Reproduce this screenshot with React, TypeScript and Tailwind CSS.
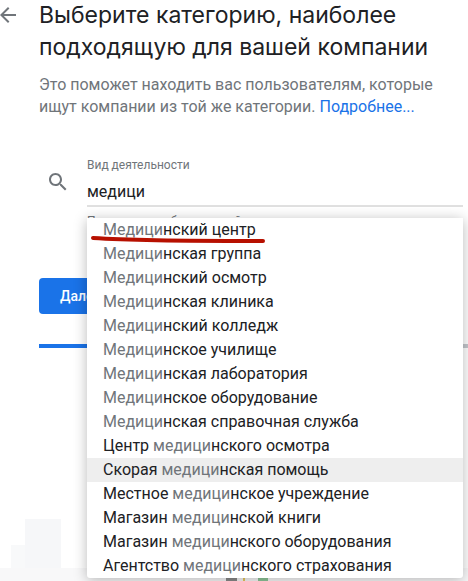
import React from 'react';

const items: [string, string, string][] = [
  ['', 'Медици', 'нский центр'],
  ['', 'Медици', 'нская группа'],
  ['', 'Медици', 'нский осмотр'],
  ['', 'Медици', 'нская клиника'],
  ['', 'Медици', 'нский колледж'],
  ['', 'Медици', 'нское училище'],
  ['', 'Медици', 'нская лаборатория'],
  ['', 'Медици', 'нское оборудование'],
  ['', 'Медици', 'нская справочная служба'],
  ['Центр ', 'медици', 'нского осмотра'],
  ['Скорая ', 'медици', 'нская помощь'],
  ['Местное ', 'медици', 'нское учреждение'],
  ['Магазин ', 'медици', 'нской книги'],
  ['Магазин ', 'медици', 'нского оборудования'],
  ['Агентство ', 'медици', 'нского страхования'],
];

function App() {
  return (
    <div className="relative h-[581px] w-[468px] overflow-hidden bg-white font-['Roboto',sans-serif]">
      <svg className="absolute left-[-4px] top-[3px] h-[24px] w-[24px] text-[#70757a]" viewBox="0 0 24 24" fill="currentColor">
        <path d="M20 11H7.83l5.59-5.59L12 4l-8 8 8 8 1.41-1.41L7.83 13H20v-2z" />
      </svg>

      <div className="flex flex-col pl-[39px]">
        <h1 className="whitespace-nowrap font-['Inter',sans-serif] text-[23px] text-[#202124]">
          <span className="block leading-[30px]">Выберите категорию, наиболее</span>
          <span className="mt-[1px] block leading-[32px]">подходящую для вашей компании</span>
        </h1>
        <p className="mt-[11px] whitespace-nowrap text-[16px] leading-[22px] text-[#70757a]">
          Это поможет находить вас пользователям, которые
          <br />
          ищут компании из той же категории. <span className="text-[#1a73e8]">Подробнее...</span>
        </p>

        <div className="mt-[39px] flex">
          <svg className="ml-[7px] mt-[13px] h-[24px] w-[24px] text-[#70757a]" viewBox="0 0 24 24" fill="currentColor">
            <path d="M15.5 14h-.79l-.28-.27C15.41 12.59 16 11.11 16 9.5 16 5.91 13.09 3 9.5 3S3 5.91 3 9.5 5.91 16 9.5 16c1.61 0 3.09-.59 4.23-1.57l.27.28v.79l5 4.99L20.49 19l-4.99-5zm-6 0C7.01 14 5 11.99 5 9.5S7.01 5 9.5 5 14 7.01 14 9.5 11.99 14 9.5 14z" />
          </svg>
          <div className="ml-[17px] w-[376px]">
            <div className="text-[12px] leading-[16px] text-[#70757a]">Вид деятельности</div>
            <div className="mt-[9px] border-b-2 border-[#e0e0e0] pb-[3px] text-[16px] leading-[20px] text-[#202124]">медици</div>
            <div className="mt-[6px] whitespace-nowrap text-[12px] leading-[16px] text-[#70757a]">
              Пользователи быстрее найдут вашу компанию
            </div>
          </div>
        </div>

        <button className="mt-[49px] flex h-[36px] w-[90px] items-center rounded-[4px] bg-[#1a73e8] pl-[21px] text-[14px] font-medium text-white">
          Далее
        </button>
        <div className="mt-[30px] flex h-[4px]">
          <div className="w-[60px] bg-[#1a73e8]" />
          <div className="flex-1 bg-[#c4c7cc]" />
        </div>
      </div>

      <div className="absolute left-[25px] top-[519px] h-[56px] w-[36px] bg-[#f6f7f9]" />
      <div className="absolute left-[11px] top-[545px] h-[30px] w-[14px] bg-[#f8f9fa]" />
      <div className="absolute bottom-0 left-0 h-[13px] w-full bg-[#f8f8f9]" />
      <svg className="absolute left-[225px] top-[575px]" width="46" height="6" viewBox="0 0 46 6">
        <rect x="1" y="1" width="11" height="5" fill="#8a8a8a" />
        <rect x="18" y="1" width="2" height="5" fill="#e8c860" />
        <rect x="33" y="1" width="10" height="5" fill="#8fc79a" />
      </svg>

      <div className="absolute left-[87px] top-[218px] w-[376px] rounded-b-[3px] bg-white text-[16px] leading-[24px] text-[#202124] shadow-[0_2px_14px_rgba(0,0,0,0.28)]">
        {items.map(([before, match, after], i) => (
          <div key={i} className={i === 10 ? 'bg-[#eeeeee] pl-[16px]' : 'pl-[16px]'}>
            {before}
            <span className="text-[#70757a]">{match}</span>
            {after}
          </div>
        ))}
      </div>

      <svg className="absolute left-[90px] top-[232px]" width="176" height="14" viewBox="0 0 176 14">
        <path d="M3 6 C50 9 120 9 173 9" fill="none" stroke="#b71000" strokeWidth="4" strokeLinecap="round" />
      </svg>
    </div>
  );
}

export default App;
